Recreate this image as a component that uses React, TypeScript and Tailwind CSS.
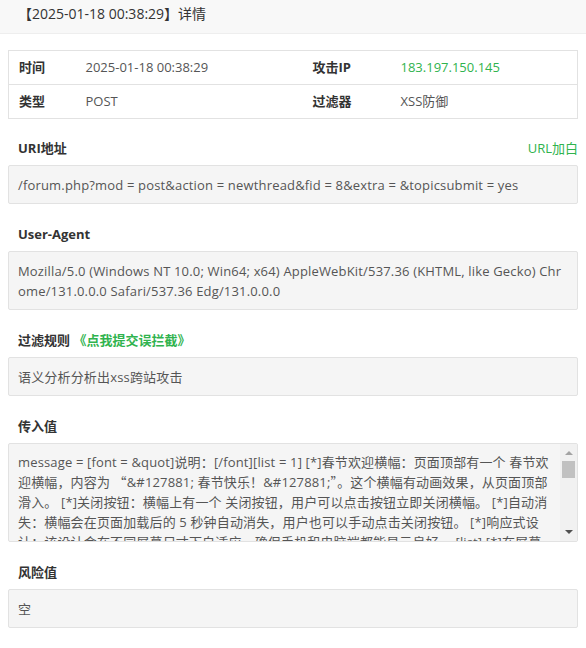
import React from 'react';

const font = { fontFamily: '"Open Sans", "Noto Sans CJK SC", sans-serif' };
const cjk = { fontFamily: '"Noto Sans CJK SC", sans-serif' };

const Q = ({ c }: { c: string }) => <span style={cjk}>{c}</span>;

const Label = ({ children, right }: { children: React.ReactNode; right?: React.ReactNode }) => (
  <div className="mt-5 mb-[7px] flex h-5 items-center justify-between pl-[10px] text-[13px] leading-5 font-bold text-[#333]">
    <div>{children}</div>
    {right}
  </div>
);

const Box = ({ children }: { children: React.ReactNode }) => (
  <div className="rounded-[2px] border border-[#e2e2e2] bg-[#f5f5f5] px-[9px] py-[8.5px] text-[13px] leading-5 tracking-[0.17px] text-[#555] break-all">
    {children}
  </div>
);

export default function App() {
  return (
    <div className="min-h-[648px] bg-white" style={font}>
      <div className="h-[34px] border-b border-[#eee] bg-[#f8f8f8] px-[18px] pt-1 text-[14px] leading-5 text-[#333]">
        【2025-01-18 00:38:29】详情
      </div>

      <div className="px-2 pt-4">
        <table className="w-full table-fixed border-collapse border border-[#e2e2e2] text-[13px] text-[#555]">
          <colgroup>
            <col className="w-[67px]" />
            <col className="w-[227px]" />
            <col className="w-[88px]" />
            <col />
          </colgroup>
          <tbody>
            <tr className="h-[34px] border-b border-[#e2e2e2]">
              <td className="px-[10px] font-bold text-[#333]">时间</td>
              <td className="px-[10px]">2025-01-18 00:38:29</td>
              <td className="px-[10px] font-bold text-[#333]">攻击IP</td>
              <td className="px-[10px] text-[#30b34e]">183.197.150.145</td>
            </tr>
            <tr className="h-[34px]">
              <td className="px-[10px] font-bold text-[#333]">类型</td>
              <td className="px-[10px]">POST</td>
              <td className="px-[10px] font-bold text-[#333]">过滤器</td>
              <td className="px-[10px]">XSS防御</td>
            </tr>
          </tbody>
        </table>

        <div className="mt-[-1px]">
          <Label right={<span className="font-normal text-[#30b34e]">URL加白</span>}>URI地址</Label>
        </div>
        <Box>/forum.php?mod = post&amp;action = newthread&amp;fid = 8&amp;extra = &amp;topicsubmit = yes</Box>

        <Label>User-Agent</Label>
        <Box>
          Mozilla/5.0 (Windows NT 10.0; Win64; x64) AppleWebKit/537.36 (KHTML, like Gecko) Chrome/131.0.0.0 Safari/537.36 Edg/131.0.0.0
        </Box>

        <Label>
          过滤规则 <span className="text-[#30b34e]">《点我提交误拦截》</span>
        </Label>
        <Box>语义分析分析出xss跨站攻击</Box>

        <Label>传入值</Label>
        <div className="relative h-[99px] overflow-hidden rounded-[2px] border border-[#e2e2e2] bg-[#f5f5f5]">
          <div className="py-2 pr-[26px] pl-[9px] text-[13px] leading-5 tracking-[0.15px] text-[#555] break-all">
            message = [font = &amp;quot]说明：[/font][list = 1] [*]春节欢迎横幅：页面顶部有一个 春节欢迎横幅，内容为 <Q c="“" />
            &amp;#127881; 春节快乐！&amp;#127881;<Q c="”" />。这个横幅有动画效果，从页面顶部滑入。 [*]关闭按钮：横幅上有一个
            关闭按钮，用户可以点击按钮立即关闭横幅。 [*]自动消失：横幅会在页面加载后的 5
            秒钟自动消失，用户也可以手动点击关闭按钮。 [*]响应式设计：该设计会在不同屏幕尺寸下自适应，确保手机和电脑端都能显示良好。
            [list] [*]在屏幕宽度小于 768px 时，横幅的字体大小和按钮尺寸会自动缩小。 [*]在大屏幕上横幅居中显示，左右留白。 [/list] [/list]
          </div>
          <div className="absolute top-0 right-0 bottom-0 flex w-[17px] flex-col items-center bg-[#f1f1f1]">
            <div className="flex h-[17px] w-full items-center justify-center">
              <svg width="8" height="5" viewBox="0 0 8 5">
                <path d="M0 5 L4 1 L8 5 Z" fill="#a3a3a3" />
              </svg>
            </div>
            <div className="h-[17px] w-[13px] bg-[#c1c1c1]" />
            <div className="flex-1" />
            <div className="flex h-[17px] w-full items-center justify-center">
              <svg width="8" height="5" viewBox="0 0 8 5">
                <path d="M0 0 L4 4 L8 0 Z" fill="#505050" />
              </svg>
            </div>
          </div>
        </div>

        <Label>风险值</Label>
        <Box>空</Box>
      </div>
    </div>
  );
}
